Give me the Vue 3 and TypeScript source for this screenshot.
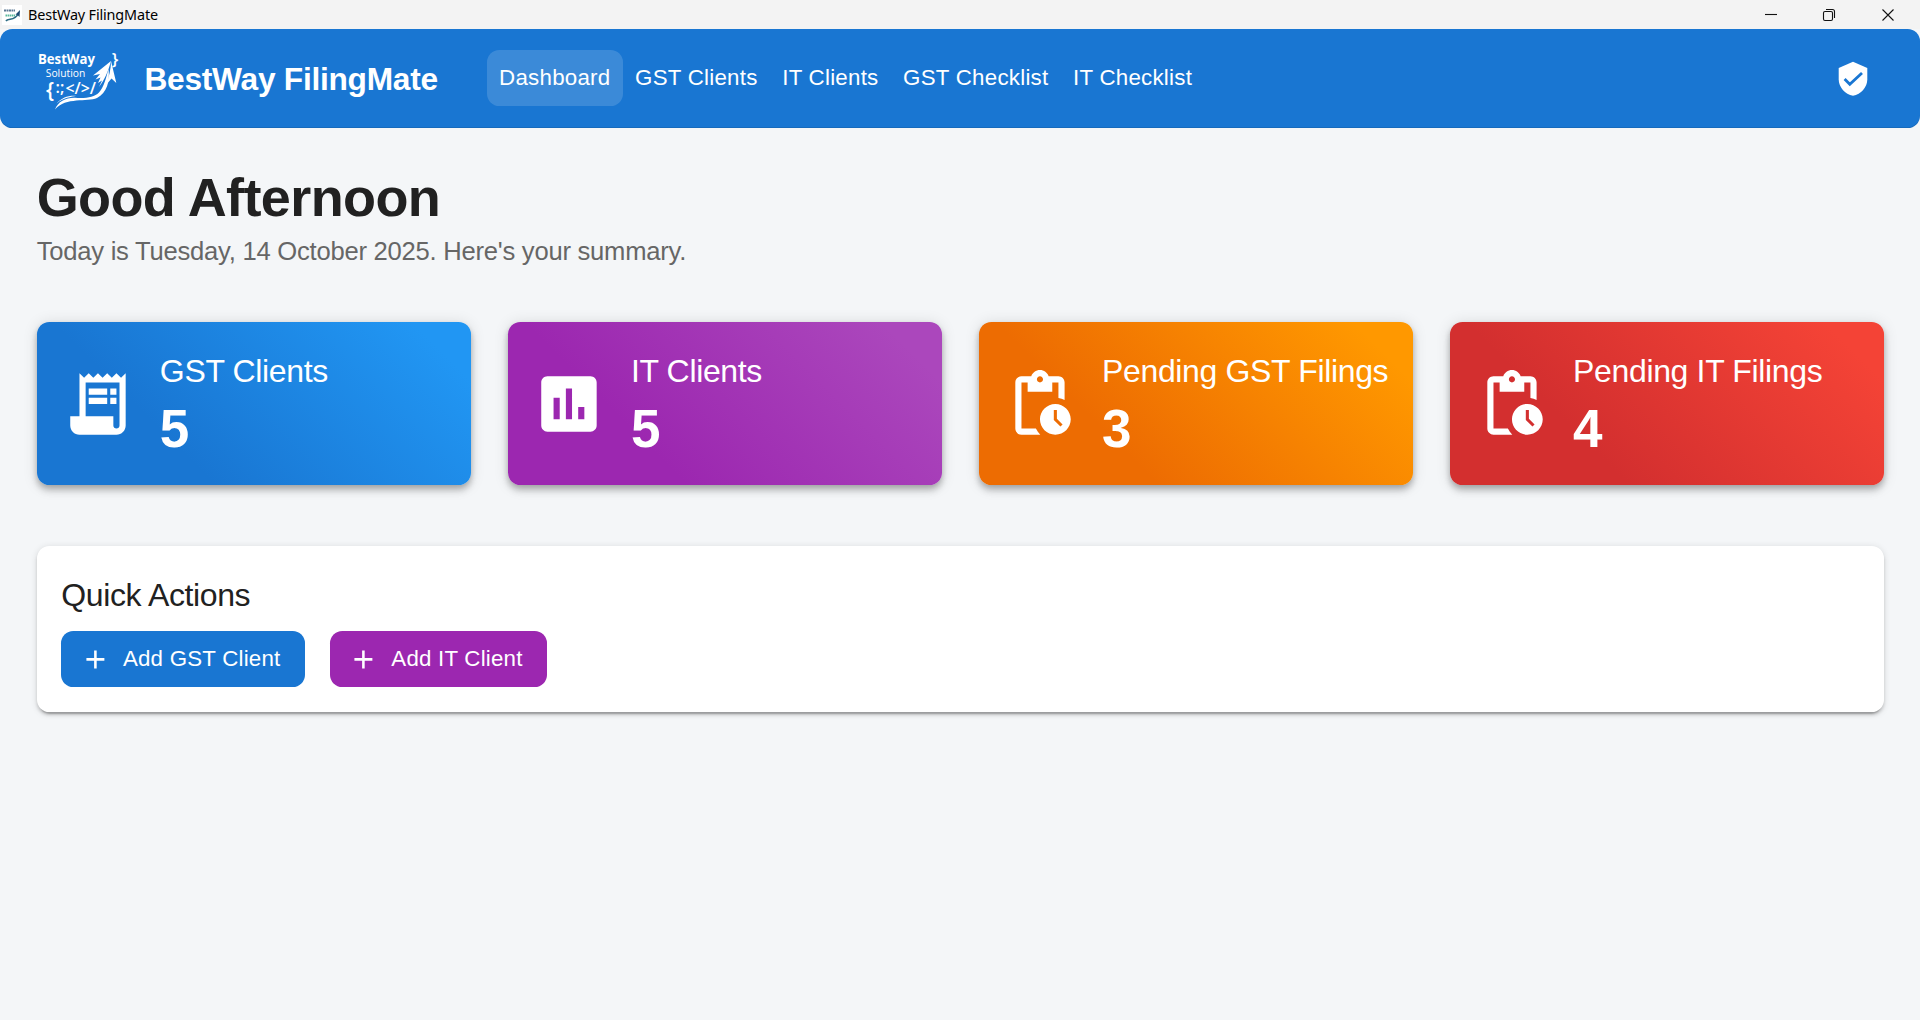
<script setup lang="ts">
interface StatCard {
  label: string
  value: number
  tone: string
  icon: string
}

const navItems: string[] = ['Dashboard', 'GST Clients', 'IT Clients', 'GST Checklist', 'IT Checklist']
const active = 'Dashboard'

const receiptIcon =
  'M19.5 3.5 18 2l-1.5 1.5L15 2l-1.5 1.5L12 2l-1.5 1.5L9 2 7.5 3.5 6 2v14H3v3c0 1.66 1.34 3 3 3h12c1.66 0 3-1.34 3-3V2l-1.5 1.5zM19 19c0 .55-.45 1-1 1s-1-.45-1-1v-3H8V5h11v14zM9 7h6v2H9zM16 7h2v2h-2zM9 10h6v2H9zM16 10h2v2h-2z'
const chartIcon =
  'M19 3H5c-1.1 0-2 .9-2 2v14c0 1.1.9 2 2 2h14c1.1 0 2-.9 2-2V5c0-1.1-.9-2-2-2zM9 17H7v-7h2v7zm4 0h-2V7h2v10zm4 0h-2v-4h2v4z'
const pendingIcon =
  'M17 12c-2.76 0-5 2.24-5 5s2.24 5 5 5 5-2.24 5-5-2.24-5-5-5zm1.65 7.35L16.5 17.2V14h1v2.79l1.85 1.85-.7.71zM18 3h-3.18C14.4 1.84 13.3 1 12 1s-2.4.84-2.82 2H6c-1.1 0-2 .9-2 2v15c0 1.1.9 2 2 2h6.11c-.59-.57-1.07-1.25-1.42-2H6V5h2v3h8V5h2v5.08c.71.1 1.38.31 2 .6V5c0-1.1-.9-2-2-2zm-6 2c-.55 0-1-.45-1-1s.45-1 1-1 1 .45 1 1-.45 1-1 1z'

const cards: StatCard[] = [
  { label: 'GST Clients', value: 5, tone: 'blue', icon: receiptIcon },
  { label: 'IT Clients', value: 5, tone: 'purple', icon: chartIcon },
  { label: 'Pending GST Filings', value: 3, tone: 'orange', icon: pendingIcon },
  { label: 'Pending IT Filings', value: 4, tone: 'red', icon: pendingIcon },
]

const actions = [
  { label: 'Add GST Client', tone: 'solid-blue' },
  { label: 'Add IT Client', tone: 'solid-purple' },
]
</script>

<template>
  <div class="window">
    <div class="titlebar">
      <svg class="app-icon" viewBox="0 0 20 20">
        <rect width="20" height="20" fill="#fff" />
        <path d="M2 5.5h11" stroke="#5b7893" stroke-width="2" stroke-dasharray="2 .5" />
        <path d="M3.5 10.5h10" stroke="#58b79a" stroke-width="2" stroke-dasharray="1.5 .5" />
        <path d="M4 16c2-3 9 0 12-7" stroke="#2b6b83" stroke-width="1.7" fill="none" />
        <path d="M18 5l-4.500 4.500 2 .5 2 2z" fill="#1e4c74" />
      </svg>
      <span class="window-title">BestWay FilingMate</span>
      <div class="window-controls">
        <svg viewBox="0 0 14 14"><path d="M1 6.500h12" /></svg>
        <svg viewBox="0 0 14 14">
          <rect x="1.500" y="3.500" width="9" height="9" rx="1.500" />
          <path d="M4 1.500h6.500a2 2 0 0 1 2 2V10" />
        </svg>
        <svg viewBox="0 0 14 14"><path d="M1.500 1.500l11 11M12.500 1.500l-11 11" /></svg>
      </div>
    </div>

    <header class="appbar">
      <svg class="logo" viewBox="17 8 84 64" fill="#fff">
        <text x="18" y="24" textLength="57" lengthAdjust="spacingAndGlyphs" class="logo-name">BestWay</text>
        <text x="25.800" y="36.500" textLength="39.500" lengthAdjust="spacingAndGlyphs" class="logo-sub">Solution</text>
        <text x="26" y="58" class="logo-brace">{</text>
        <text x="35.500" y="53" textLength="9" class="logo-code">:;</text>
        <text x="45.500" y="53.500" textLength="30.500" lengthAdjust="spacingAndGlyphs" class="logo-code">&lt;/&gt;/</text>
        <text x="91.800" y="25" class="logo-brace-sm">}</text>
        <path d="M35 69.500C38 61.500 46 57.500 55 57.800C66 58.500 74 57.500 79 52.500C84 47 86 38 88.500 29C90 41 87 53 77 58C67 62.500 46 56.500 35 69.500Z" />
        <path d="M36.500 63.500C42 57.500 48 55.300 56 55.800C52 57 43 57.500 36.500 63.500Z" />
        <path d="M91 21L73 35.500L80 34L75.500 39.500L80.500 37.500L78 43L82 40.500L79 47C84.500 40 88 32 91 21Z" />
        <path d="M91 21L96.300 43L91.500 38.500L86 45C89 37 91 29 91 21Z" />
      </svg>
      <h1 class="brand">BestWay FilingMate</h1>
      <nav class="nav">
        <a v-for="item in navItems" :key="item" class="nav-item" :class="{ active: item === active }">{{ item }}</a>
      </nav>
      <svg class="shield" viewBox="0 0 30 36">
        <path
          d="M15 .8L29.300 7v11.500C29.300 26 23 33.500 15 34.800C7 33.500 .7 26 .7 18.500V7z"
          fill="#fff"
        />
        <path d="M6.600 18l5.200 5.300L24 12" fill="none" stroke="#1976d2" stroke-width="2.800" />
      </svg>
    </header>

    <main class="content">
      <h2 class="greeting">Good Afternoon</h2>
      <p class="summary">Today is Tuesday, 14 October 2025. Here's your summary.</p>

      <section class="cards">
        <article v-for="card in cards" :key="card.label" class="card" :class="card.tone">
          <svg class="card-icon" viewBox="0 0 24 24"><path :d="card.icon" fill="#fff" /></svg>
          <div>
            <div class="card-label">{{ card.label }}</div>
            <div class="card-value">{{ card.value }}</div>
          </div>
        </article>
      </section>

      <section class="panel">
        <h3 class="panel-title">Quick Actions</h3>
        <div class="actions">
          <button v-for="action in actions" :key="action.label" class="btn" :class="action.tone">
            <svg viewBox="0 0 24 24"><path d="M19 13h-6v6h-2v-6H5v-2h6V5h2v6h6z" fill="#fff" /></svg>
            {{ action.label }}
          </button>
        </div>
      </section>
    </main>
  </div>
</template>

<style>
html {
  font-size: 24.64px;
}
body {
  background: #f5f6f8;
}
</style>

<style scoped>
.window {
  min-height: 1020px;
  box-sizing: border-box;
  background: #f4f6f8;
  color: #212121;
  font-family: 'Liberation Sans', Arial, sans-serif;
}
h1,
h2,
h3,
p {
  margin: 0;
}
.titlebar {
  height: 29px;
  display: flex;
  align-items: center;
  background: #f3f3f3;
}
.app-icon {
  width: 20px;
  height: 20px;
  margin: 0 6px 0 2px;
}
.window-title {
  font-family: 'Noto Sans', sans-serif;
  font-size: 14.400px;
  line-height: 20px;
  letter-spacing: -0.150px;
  color: #000;
}
.window-controls {
  margin-left: auto;
  display: flex;
  gap: 44.500px;
  padding-right: 25px;
}
.window-controls svg {
  width: 14px;
  height: 14px;
  fill: none;
  stroke: #111;
  stroke-width: 1.100;
}
.window-controls svg:nth-child(2) {
  margin: 0 0.500px 0 -0.500px;
}
.appbar {
  height: 99px;
  box-sizing: border-box;
  padding: 0 52px 0 37px;
  display: flex;
  align-items: center;
  background: #1976d2;
  border-radius: 12.300px;
  box-shadow: inset 0 -1px 0 rgba(0, 0, 0, 0.1);
  color: #fff;
}
.logo {
  width: 84px;
  height: 64px;
  margin: 3px 23.500px 0 0;
}
.logo text {
  font-family: 'Open Sans', sans-serif;
}
.logo .logo-name {
  font-size: 14px;
  font-weight: 700;
}
.logo .logo-sub {
  font-size: 10.500px;
}
.logo .logo-brace {
  font-size: 21px;
  font-weight: 600;
}
.logo .logo-code {
  font-size: 16px;
  font-weight: 600;
}
.logo .logo-brace-sm {
  font-size: 17px;
  font-weight: 600;
}
.brand {
  padding-top: 2px;
  font-size: 31.700px;
  font-weight: 700;
  line-height: 2rem;
  letter-spacing: -0.270px;
}
.nav {
  display: flex;
  margin: 0 0 1px 49px;
}
.nav-item {
  padding: 9.500px 0.500rem 9px;
  border-radius: 12.300px;
  font-size: 22.300px;
  line-height: 1.531rem;
  letter-spacing: 0.250px;
}
.nav-item.active {
  background: rgba(255, 255, 255, 0.15);
}
.shield {
  width: 30px;
  height: 36px;
  margin-left: auto;
}
.content {
  padding: 1.500rem 36px 0 36.700px;
}
.greeting {
  font-size: 54px;
  font-weight: 700;
  line-height: 2.625rem;
  letter-spacing: -0.600px;
}
.summary {
  font-size: 25.600px;
  line-height: 1.750rem;
  letter-spacing: -0.240px;
  color: #666;
}
.cards {
  display: grid;
  grid-template-columns: repeat(4, 1fr);
  gap: 37px;
  margin-top: 2rem;
}
.card {
  display: flex;
  align-items: center;
  gap: 1rem;
  padding: 1rem;
  border-radius: 12.300px;
  color: #fff;
  box-shadow:
    0 3px 6px -1.500px rgba(0, 0, 0, 0.2),
    0 6px 7.700px rgba(0, 0, 0, 0.14),
    0 1.500px 15.400px rgba(0, 0, 0, 0.12);
}
.card.blue {
  background: linear-gradient(45deg, #1976d2 30%, #2196f3 90%);
}
.card.purple {
  background: linear-gradient(45deg, #9c27b0 30%, #ab47bc 90%);
}
.card.orange {
  background: linear-gradient(45deg, #ed6c02 30%, #ff9800 90%);
}
.card.red {
  background: linear-gradient(45deg, #d32f2f 30%, #f44336 90%);
}
.card-icon {
  width: 3rem;
  height: 3rem;
  flex: none;
}
.card-label {
  font-size: 32px;
  line-height: 2rem;
  letter-spacing: -0.350px;
  white-space: nowrap;
}
.card-value {
  padding-top: 2px;
  font-size: 53px;
  font-weight: 700;
  line-height: 62.700px;
}
.panel {
  margin-top: 2.480rem;
  padding: 1rem;
  border-radius: 12.300px;
  background: #fff;
  box-shadow:
    0 4.600px 1.500px -3px rgba(0, 0, 0, 0.2),
    0 3px 3px rgba(0, 0, 0, 0.14),
    0 1.500px 7.700px rgba(0, 0, 0, 0.12);
}
.panel-title {
  margin-bottom: 10.800px;
  font-size: 32px;
  font-weight: 400;
  line-height: 2rem;
  letter-spacing: -0.380px;
}
.actions {
  display: flex;
  gap: 1rem;
}
.btn {
  display: flex;
  align-items: center;
  gap: 0.500rem;
  padding: 0.375rem 1rem 0.375rem 0.750rem;
  border: 0;
  border-radius: 12.300px;
  color: #fff;
  font-family: inherit;
  font-size: 22.300px;
  line-height: 1.531rem;
  letter-spacing: 0.220px;
}
.btn svg {
  width: 1.250rem;
  height: 1.250rem;
}
.solid-blue {
  background: #1976d2;
}
.solid-purple {
  background: #9c27b0;
}
</style>
